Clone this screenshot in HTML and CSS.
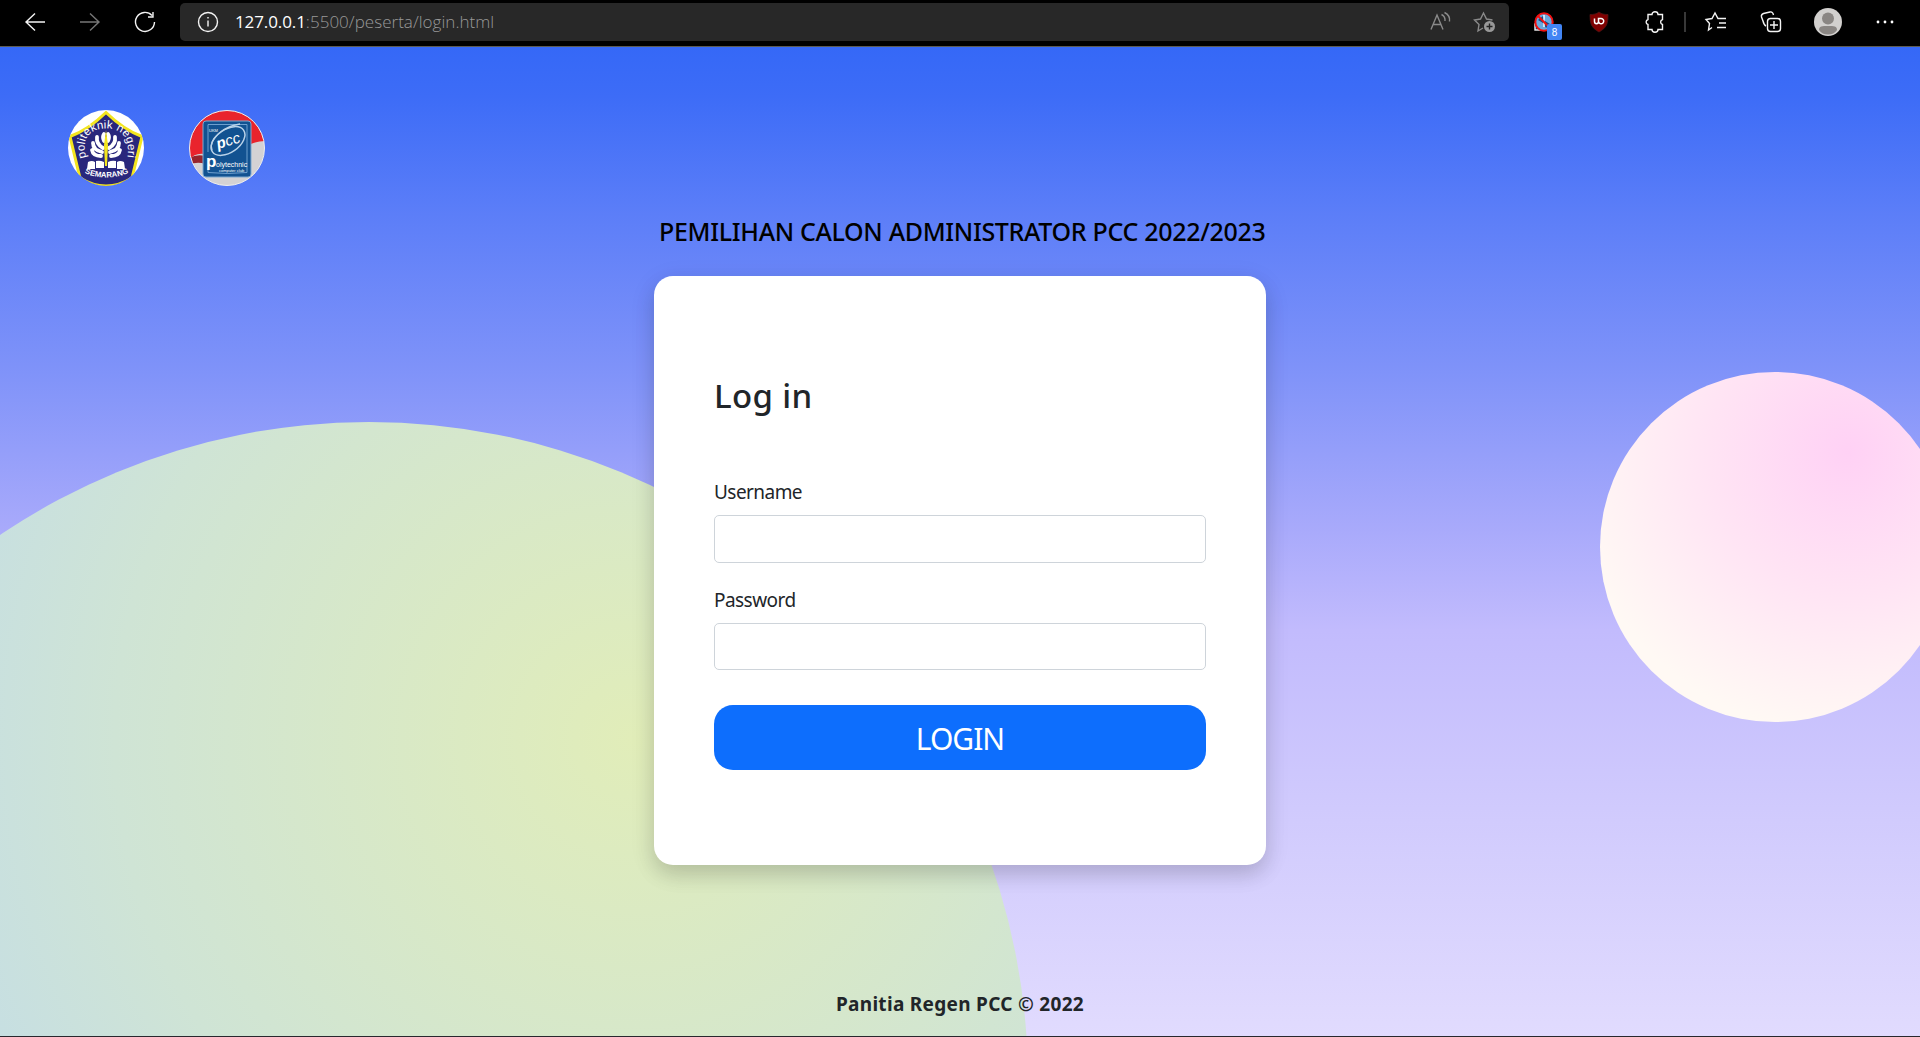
FILE: index.html
```html
<!DOCTYPE html>
<html lang="id">
<head>
<meta charset="utf-8">
<title>Login</title>
<link rel="stylesheet" href="styles.css">
</head>
<body>
<header class="toolbar">
  <svg class="nav" viewBox="0 0 24 24"><path d="M22 12H3M12 3.500L3 12l9 8.500"/></svg>
  <svg class="nav dim" viewBox="0 0 24 24"><path d="M2 12h19M12 3.500L21 12l-9 8.500"/></svg>
  <svg class="nav" viewBox="0 0 24 24"><path d="M19 5.500A9.500 9.500 0 1 0 21.500 12M20 2v5h-5"/></svg>
  <div class="address">
    <svg class="info" viewBox="0 0 24 24"><circle cx="12" cy="12" r="9.500"/><path d="M12 10.500v6M12 7v1.500"/></svg>
    <span class="url"><b>127.0.0.1</b>:5500/peserta/login.html</span>
    <svg class="read" viewBox="0 0 24 24"><path d="M3 19.500L9 5l6 14.500M5.500 14.500h7M13.500 4.500q4 2 3.500 6.500M16.500 2.500q6 3 5 9"/></svg>
    <svg class="fav" viewBox="0 0 24 24"><path d="M10 18l-5 3 1-6.500L1.500 10l6-1L10.500 3l3 6 6 1"/><circle class="fill" cx="16.500" cy="16.500" r="5.500"/><path class="cut" d="M16.500 13.500v6M13.500 16.500h6"/></svg>
  </div>
  <div class="ext">
    <svg viewBox="0 0 24 24"><rect x="3" y="14" width="9" height="6" fill="#123a70"/><circle cx="12" cy="12" r="8.700" fill="#6aa9de" stroke="#f01010" stroke-width="2"/><path d="M6 10l5-4 2 5 5 3-4 4-3-5z" fill="#174b83" stroke="none"/><path d="M12 5v12" stroke="#fff"/><path d="M6 6l12 12" stroke="#f01010" stroke-width="2"/></svg>
    <span class="count">8</span>
  </div>
  <svg class="shield" viewBox="0 0 24 24"><path d="M12 2c2.500 2 5 2.500 9 2.500 0 9-1 13-9 17.500C4 17.500 3 13.500 3 4.500 7 4.500 9.500 4 12 2z"/><path class="mark" d="M7.500 8.500v3q0 2.200 2 2.200t2-2.200V8.500h2.500a2.600 2.600 0 1 1-2.500 2.600"/></svg>
  <svg class="puzzle" viewBox="0 0 24 24"><path d="M9 4.500a3 2.700 0 0 1 6 0h4.500v5a2.600 2.600 0 0 0 0 5v5H15a3 2.700 0 0 1-6 0H5v-5a2.600 2.600 0 0 1 0-5v-5z"/></svg>
  <i class="sep"></i>
  <svg class="list" viewBox="0 0 24 24"><path d="M8 17.500L4.500 20l1-6.500L2 9.500l6-1L11 3l3 5.500h8M15 13h7M13 17.500h9"/></svg>
  <svg class="coll" viewBox="0 0 24 24"><path d="M7 16c-2-1-2.500-3-3-5L2.500 7C2 5 3 4 4.500 3.500L11 2c2-.5 3 1 3.500 3"/><rect x="8.500" y="8.500" width="13" height="13" rx="3"/><path d="M15 11v8M11 15h8"/></svg>
  <svg class="avatar" viewBox="0 0 28 28"><circle cx="14" cy="14" r="14" fill="#d2d0ce"/><circle cx="14" cy="10.500" r="6" fill="#8a8683"/><path d="M5 22c0-4 3-4 9-4s9 0 9 4c-2 3-5 4.500-9 4.500S7 25 5 22z" fill="#8a8683"/></svg>
  <svg class="more" viewBox="0 0 24 24"><circle cx="5" cy="12" r="1.400"/><circle cx="12" cy="12" r="1.400"/><circle cx="19" cy="12" r="1.400"/></svg>
</header>
<main class="page">
  <div class="blob green"></div>
  <div class="blob pink"></div>
  <div class="logos">
    <svg viewBox="0 0 76 76">
      <defs><path id="arc" d="M18.500 47.500C12 28 23 18.500 38 18.500S66 28 57 58"/><path id="base" d="M16.500 63q21.500 9 44 0"/><clipPath id="seal"><circle cx="38" cy="38" r="38"/></clipPath></defs>
      <circle cx="38" cy="38" r="38" fill="#fff"/>
      <path clip-path="url(#seal)" d="M38 2.500Q56 20 74 26.500L64 68q-26 16-52 0L2 26.500Q20 20 38 2.500z" fill="#29277c" stroke="#f3e51f" stroke-width="3"/>
      <text class="ring"><textPath href="#arc">politeknik negeri</textPath></text>
      <g fill="none" stroke="#fff" stroke-width="3.800" stroke-linecap="round"><path d="M33 46q-8 0-9-6M34 42q-9-2-9-9M35 38q-7-4-6-11M36 31q-2-4 0-7M43 46q8 0 9-6M42 42q9-2 9-9M41 38q7-4 6-11M40 31q2-4 0-7"/></g>
      <path d="M20 52q4-2 7 0v7h-8zM28 51q4-1 8 1v6h-8zM56 52q-4-2-7 0v7h8zM48 51q-4-1-8 1v6h8z" fill="#fff"/>
      <path d="M38 20l2 15-1 21h-2l-1-21z" fill="#f3e51f"/>
      <text class="semarang"><textPath href="#base">SEMARANG</textPath></text>
    </svg>
    <svg viewBox="0 0 76 76">
      <defs><clipPath id="disc"><circle cx="38" cy="38" r="37.500"/></clipPath></defs>
      <g clip-path="url(#disc)"><path d="M0 0h76v76H0z" fill="#d4d2d4"/><path d="M0 0h76v31q-7 0-14 3l-40 12Q8 40 0 50z" fill="#e9242d"/><path d="M0 48q8-4 16-2v8Q8 51 0 55z" fill="#98242d"/></g>
      <circle cx="38" cy="38" r="37.500" fill="none" stroke="#eee"/>
      <rect x="14" y="11" width="48" height="56" rx="3" fill="#125291" stroke="#7da8d0"/>
      <path d="M19 42V14.500h39v48q-20 2-39 0v-4" fill="none" stroke="#78a8d6" stroke-width=".9"/>
      <path d="M23 40C19 29 35 16 51 14" fill="none" stroke="#b9d2e9" stroke-width="1.300"/>
      <ellipse cx="39" cy="31" rx="19" ry="11.500" transform="rotate(-35 39 31)" fill="none" stroke="#b9d2e9" stroke-width="1.500"/>
      <text x="29" y="39" class="pcc" transform="rotate(-17 29 39)"><tspan class="boldp">p</tspan>cc</text>
      <text x="20" y="22" class="tiny">UKM</text><text x="17" y="57" class="bigp">p</text>
      <text x="27" y="57" class="poly">olytechnic</text><text x="30" y="62" class="tiny">computer club</text>
    </svg>
  </div>
  <h1 class="title">PEMILIHAN CALON ADMINISTRATOR PCC 2022/2023</h1>
  <form class="card">
    <h2>Log in</h2>
    <label for="username">Username</label>
    <input id="username" type="text">
    <label for="password">Password</label>
    <input id="password" type="password">
    <button type="button">LOGIN</button>
  </form>
  <footer>Panitia Regen PCC © 2022</footer>
</main>
</body>
</html>
```
FILE: styles.css
```css
* { box-sizing: border-box; }
body { margin: 0; height: 1037px; overflow: hidden; background: #28282e; font-family: "Noto Sans", "Open Sans", sans-serif; color: #212529; }
.toolbar { height: 47px; background: #000; border-bottom: 1px solid #5c5c54; display: flex; align-items: center; padding: 0 0 2px 23px; }
.toolbar svg { width: 24px; height: 24px; flex: none; fill: none; stroke: #f4f4f4; stroke-width: 1.4; }
.toolbar .nav { margin-right: 31px; }
.toolbar .dim { stroke: #777; }
.address { width: 1329px; height: 38px; margin-left: -8px; border-radius: 5px; background: #282828; display: flex; align-items: center; padding: 0 12px 0 16px; }
.url { flex: 1; margin-left: 15px; font: 300 17px/24px "Open Sans", sans-serif; color: #999; letter-spacing: .03px; }
.url b { font-weight: 400; color: #fff; letter-spacing: -.1px; }
.address .read, .address .fav { stroke: #8a8a8a; }
.address .read { margin-right: 21px; }
.address .fav .fill { fill: #999; stroke: none; }
.address .fav .cut { stroke: #222; }
.ext { position: relative; width: 24px; height: 24px; margin-left: 23px; }
.count { position: absolute; left: 15px; top: 14px; width: 15px; height: 16px; border-radius: 2px; background: #4285f4; color: #fff; font: 10px/17px "Liberation Sans", sans-serif; text-align: center; }
.toolbar .shield { margin-left: 31px; fill: #800000; stroke: #4e1515; stroke-width: .8; }
.toolbar .mark { fill: none; stroke: #fff; stroke-width: 1.5; }
.toolbar .puzzle { margin-left: 32px; }
.sep { width: 2px; height: 20px; margin-left: 17px; background: #383838; }
.toolbar .list { margin-left: 18px; }
.toolbar .coll { margin-left: 31px; }
.toolbar .avatar { width: 28px; height: 28px; margin-left: 31px; stroke: none; }
.toolbar .more { margin-left: 31px; fill: #fff; stroke: none; }
.page { position: relative; height: 989px; overflow: hidden; display: flex; flex-direction: column; align-items: center; background: linear-gradient(#3568f7 0, #3d6cf7 5%, #5c7ef8 17%, #8093f9 33%, #a9aafb 49%, #c2bbfd 59%, #d0cafd 77%, #e1dbfe 100%); }
.blob { position: absolute; border-radius: 50%; }
.green { left: -290px; top: 375px; width: 1318px; height: 1318px; background: radial-gradient(circle at 70% 24%, #e1edb9 0, #cfe4d5 38%, #c5dee4 54%); }
.pink { left: 1600px; top: 325px; width: 350px; height: 350px; background: radial-gradient(circle at 71% 23%, #ffd1f5 0, #ffe4f4 38%, #fff9f4 77%); }
.logos { align-self: flex-start; position: relative; display: flex; gap: 45px; padding: 63px 0 0 68px; height: 165px; }
.logos svg { width: 76px; height: 76px; }
.logos text { fill: #fff; font-family: "Liberation Sans", sans-serif; }
.logos .ring { font-size: 11.5px; letter-spacing: .1px; }
.logos .semarang { font-size: 7.8px; font-weight: 700; }
.logos .pcc { font-size: 15px; font-style: italic; }
.logos .boldp { font-weight: 700; }
.logos .tiny { font-size: 4px; }
.logos .bigp { font-size: 17px; font-weight: 700; }
.logos .poly { font-size: 7px; }
.title { position: relative; width: 612px; margin: 0; height: 64px; padding-left: 5px; white-space: nowrap; font: 500 25px/38px "Noto Sans", sans-serif; letter-spacing: -.32px; color: #000; }
.card { position: relative; width: 612px; height: 589px; border-radius: 19px; background: #fff; box-shadow: 0 10px 20px rgba(0,0,0,.13), 0 6px 28px rgba(0,0,0,.08); padding: 98px 60px 0; display: flex; flex-direction: column; }
h2 { margin: 0 0 56px; font: 500 33px/44px "Noto Sans", sans-serif; letter-spacing: .35px; }
label { height: 41px; padding-top: 4px; font-size: 19px; line-height: 28px; letter-spacing: -.55px; }
input { height: 48px; border: 1px solid #ced4da; border-radius: 5px; margin: 0 0 19px; background: #fff; }
#password { height: 47px; }
button { height: 65px; margin-top: 16px; border: 0; border-radius: 19px; background: #0d6efd; color: #fff; font: 400 30px/67px "Noto Sans", sans-serif; letter-spacing: -1px; padding: 0; }
footer { position: relative; margin-top: 124px; font-weight: 700; font-size: 19px; line-height: 30px; letter-spacing: .3px; white-space: nowrap; }
```
